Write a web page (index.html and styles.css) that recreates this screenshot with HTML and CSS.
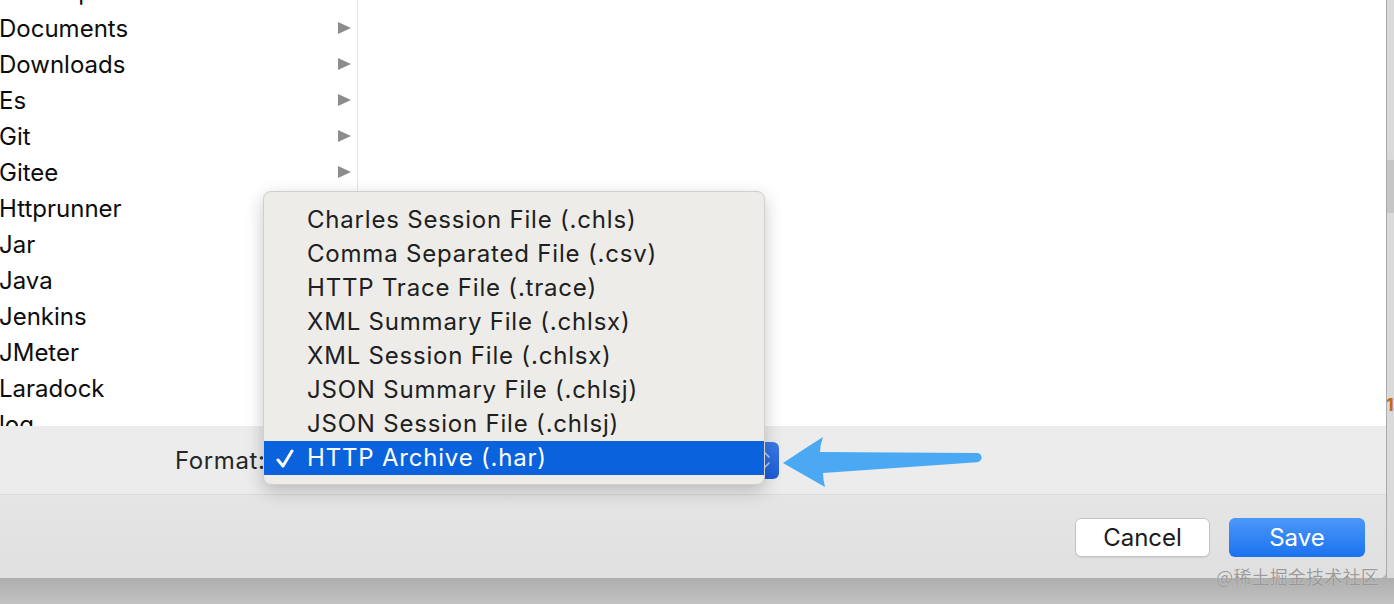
FILE: index.html
```
<!DOCTYPE html>
<html>
<head>
<meta charset="utf-8">
<link rel="stylesheet" href="styles.css">
</head>
<body>
<div class="screen">
  <div class="top">
    <div class="dialog">
      <div class="browser">
        <div class="col1">
          <ul class="list">
            <li><span>Desktop</span></li>
            <li><span>Documents</span><i class="tri"></i></li>
            <li><span>Downloads</span><i class="tri"></i></li>
            <li><span>Es</span><i class="tri"></i></li>
            <li><span>Git</span><i class="tri"></i></li>
            <li><span>Gitee</span><i class="tri"></i></li>
            <li><span>Httprunner</span><i class="tri"></i></li>
            <li><span>Jar</span><i class="tri"></i></li>
            <li><span>Java</span><i class="tri"></i></li>
            <li><span>Jenkins</span><i class="tri"></i></li>
            <li><span>JMeter</span><i class="tri"></i></li>
            <li><span>Laradock</span><i class="tri"></i></li>
            <li><span>log</span><i class="tri"></i></li>
          </ul>
        </div>
        <div class="col2"></div>
      </div>
      <div class="accessory">
        <span class="label">Format:</span>
        <div class="popup">
          <svg class="chev" width="16" height="28" viewBox="0 0 16 28">
            <path d="M3 11 L8 6 L13 11 M3 17 L8 22 L13 17" fill="none" stroke="#b9cff5" stroke-width="1.6" stroke-linecap="round"/>
          </svg>
        </div>
      </div>
      <div class="buttons">
        <button class="btn cancel">Cancel</button>
        <button class="btn save">Save</button>
      </div>
    </div>
    <div class="strip">
      <div class="thumb"></div>
      <span class="one">1</span>
    </div>
  </div>
  <div class="below"></div>

  <div class="menu">
    <div class="item">Charles Session File (.chls)</div>
    <div class="item">Comma Separated File (.csv)</div>
    <div class="item">HTTP Trace File (.trace)</div>
    <div class="item">XML Summary File (.chlsx)</div>
    <div class="item">XML Session File (.chlsx)</div>
    <div class="item">JSON Summary File (.chlsj)</div>
    <div class="item">JSON Session File (.chlsj)</div>
    <div class="item selected">
      <svg class="check" width="20" height="20" viewBox="0 0 20 20">
        <path d="M3 11 L8 17 L17 2" fill="none" stroke="#fff" stroke-width="3" stroke-linecap="round" stroke-linejoin="round"/>
      </svg>
      HTTP Archive (.har)
    </div>
  </div>

  <svg class="arrow" width="204" height="60" viewBox="0 0 204 60">
    <path d="M3 31 Q24 17 43 5 Q40 13 40 20 L197 21 A4.6 4.6 0 0 1 197 30.2 L43 41 Q43 48 45 55 Q24 43 3 31 Z" fill="#4aa9f2"/>
  </svg>

  <div class="watermark">@稀土掘金技术社区</div>
</div>
</body>
</html>
```
FILE: styles.css
```
* { box-sizing: border-box; }
html, body { margin: 0; padding: 0; }
body {
  width: 1394px;
  height: 604px;
  overflow: hidden;
  font-family: Inter, "Liberation Sans", "Noto Sans CJK SC", sans-serif;
  color: #111;
}
.screen {
  position: relative;
  width: 1394px;
  height: 604px;
  display: flex;
  flex-direction: column;
  background: #b9b9b9;
}
.top {
  display: flex;
  height: 578px;
}
.dialog {
  width: 1386px;
  height: 578px;
  display: flex;
  flex-direction: column;
  background: #e3e3e3;
  border-bottom-right-radius: 6px;
  overflow: hidden;
  box-shadow: 0 1px 0 #a8a8a8;
}
.browser {
  height: 426px;
  display: flex;
  background: #fff;
}
.col1 {
  width: 358px;
  border-right: 1px solid #e4e4e4;
  overflow: hidden;
}
.col2 { flex: 1; background: #fff; }
.list {
  list-style: none;
  margin: -28px 0 0 -1px;
  padding: 0;
}
.list li {
  height: 36px;
  display: flex;
  align-items: center;
  justify-content: space-between;
  padding-right: 6px;
  font-size: 24px;
  letter-spacing: 0px;
  color: #0d0d0d;
}
.list li:first-child { height: 38px; }
.tri {
  width: 0;
  height: 0;
  border-top: 6.5px solid transparent;
  border-bottom: 6.5px solid transparent;
  border-left: 13px solid #8c8c8c;
}
.accessory {
  height: 68px;
  background: #ececec;
  display: flex;
  align-items: center;
  padding-left: 175px;
}
.label {
  font-size: 24px;
  letter-spacing: 0.6px;
  color: #262626;
  width: 93px;
}
.popup {
  width: 511px;
  height: 37px;
  border-radius: 6px;
  background: linear-gradient(#3a7ae9, #1d5dd5);
  display: flex;
  justify-content: flex-end;
  align-items: center;
}
.chev { margin-right: 7px; }
.buttons {
  flex: 1;
  border-top: 1px solid #dadada;
  display: flex;
  justify-content: flex-end;
  align-items: center;
  gap: 19px;
  padding: 2px 21px 0 0;
  background: linear-gradient(#e5e5e5, #e0e0e0);
}
.btn {
  font-family: Inter, "Liberation Sans", sans-serif;
  font-size: 24px;
  height: 39px;
  border-radius: 6px;
  padding: 0;
}
.cancel {
  width: 135px;
  background: #fff;
  color: #1b1b1b;
  border: 1px solid #c4c4c4;
  box-shadow: 0 1px 1px rgba(0,0,0,0.08);
}
.save {
  width: 136px;
  color: #fff;
  border: none;
  background: linear-gradient(#4c98f9, #1b72ef);
}
.strip {
  position: relative;
  width: 8px;
  height: 578px;
  background: #dadada;
  border-left: 1px solid #a9a9a9;
  overflow: hidden;
}
.thumb {
  margin-top: 158px;
  height: 55px;
  background: #c6c6c6;
  border-top: 2px solid #d8d8d8;
}
.one {
  position: absolute;
  left: -1px;
  top: 394px;
  font-size: 18px;
  font-weight: 700;
  color: #c86a10;
}
.below {
  flex: 1;
  background: linear-gradient(#aeaeae, #c2c2c2);
}
.menu {
  position: absolute;
  left: 263px;
  top: 191px;
  width: 502px;
  height: 294px;
  padding: 11px 0 10px 0;
  background: #edece8;
  border-radius: 8px;
  border: 1px solid #d0cfcb;
  box-shadow: 0 6px 18px rgba(0,0,0,0.22);
}
.item {
  position: relative;
  height: 34px;
  line-height: 34px;
  padding-left: 43px;
  font-size: 24px;
  letter-spacing: 0.8px;
  color: #202020;
  white-space: nowrap;
}
.item.selected {
  background: #0a63dc;
  color: #fff;
}
.check {
  position: absolute;
  left: 11px;
  top: 8px;
}
.arrow {
  position: absolute;
  left: 780px;
  top: 432px;
}
.watermark {
  position: absolute;
  left: 1216px;
  top: 563px;
  font-family: "Noto Sans CJK SC", sans-serif;
  font-size: 18px;
  color: rgba(140,140,140,0.85);
  text-shadow: 0 0 1px rgba(255,255,255,0.6);
  letter-spacing: 0.2px;
}
```
